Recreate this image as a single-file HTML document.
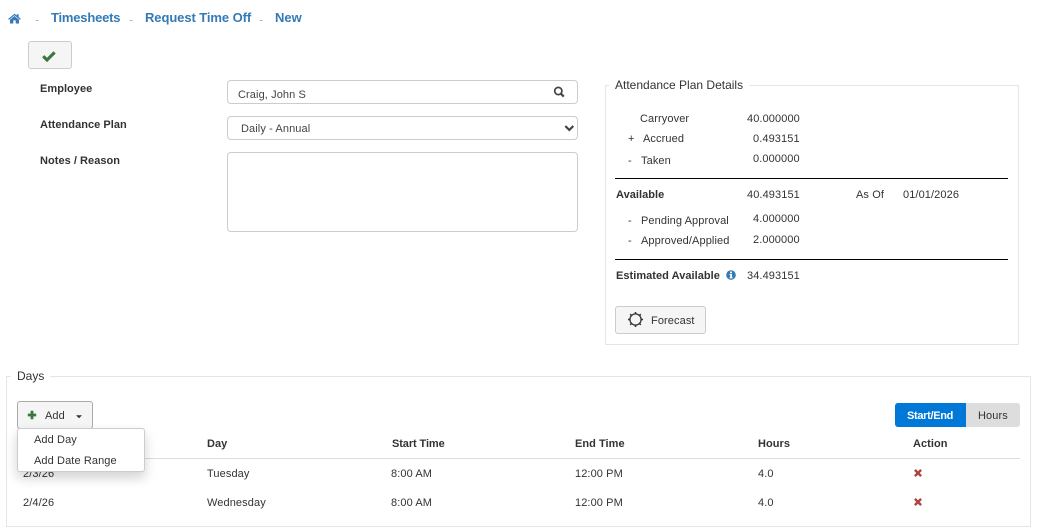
<!DOCTYPE html>
<html><head><meta charset="utf-8">
<style>
html,body{margin:0;padding:0;background:#fff}
body{width:1037px;height:532px;position:relative;overflow:hidden;font-family:"Liberation Sans",Arial,sans-serif;font-size:11px;color:#333}
.t{position:absolute;white-space:nowrap;line-height:14px;letter-spacing:.1px;margin-top:1px}
.b{font-weight:bold;letter-spacing:.04px}
.bc{font-size:13px;font-weight:bold;color:#337ab7;line-height:16px;top:10px;margin-top:0;letter-spacing:0}
.sep{color:#bbb;font-weight:normal;top:12px}
.box{position:absolute;box-sizing:border-box;border:1px solid #ccc;border-radius:4px;background:#fff}
.btn{position:absolute;box-sizing:border-box;border:1px solid #ccc;border-radius:3px;background:#f5f5f5}
.fs{position:absolute;box-sizing:border-box;border:1px solid #e5e5e5}
.leg{position:absolute;background:#fff;padding:0 6px;font-size:12px;line-height:14px;white-space:nowrap;color:#333}
.hr{position:absolute;height:1px;background:#000}
svg{position:absolute;display:block}
</style></head><body>

<svg style="left:8px;top:13px" width="13" height="11" viewBox="0 0 13 11"><path d="M6.5 0.7L0.2 5.9 1 6.9 6.5 2.3 12 6.9 12.8 5.9 10.6 4V1.2H8.8V2.5Z" fill="#337ab7"/><path d="M2 6.7L6.5 3 11 6.7V10.5H7.7V7.4H5.3V10.5H2Z" fill="#337ab7"/></svg>
<span class="t bc sep" style="left:35px">-</span>
<span class="t bc" style="left:51px;letter-spacing:-.2px">Timesheets</span>
<span class="t bc sep" style="left:129px">-</span>
<span class="t bc" style="left:145px;letter-spacing:-.08px">Request Time Off</span>
<span class="t bc sep" style="left:259px">-</span>
<span class="t bc" style="left:275px">New</span>

<div class="btn" style="left:28px;top:41px;width:44px;height:28px"></div>
<svg style="left:42px;top:50px" width="14" height="12" viewBox="0 0 14 12"><path d="M1.2 6.2L5 10 12.6 2.4" fill="none" stroke="#3c763d" stroke-width="3.1"/></svg>

<span class="t b" style="left:40px;top:81px">Employee</span>
<span class="t b" style="left:40px;top:117px">Attendance Plan</span>
<span class="t b" style="left:40px;top:153px">Notes / Reason</span>

<div class="box" style="left:227px;top:80px;width:351px;height:24px"></div>
<span class="t" style="left:238px;top:87px;color:#444">Craig, John S</span>
<svg style="left:553px;top:86px" width="13" height="13" viewBox="0 0 13 13"><circle cx="5.3" cy="5" r="3.6" fill="none" stroke="#444" stroke-width="1.7"/><path d="M8 7.8L10.8 10.6" stroke="#444" stroke-width="2.2"/></svg>

<div class="box" style="left:227px;top:116px;width:351px;height:24px"></div>
<span class="t" style="left:241px;top:121px;color:#444">Daily - Annual</span>
<svg style="left:564px;top:124px" width="12" height="9" viewBox="0 0 12 9"><path d="M1.3 2L5.3 6 9.3 2" fill="none" stroke="#444" stroke-width="2.2"/></svg>

<div class="box" style="left:227px;top:152px;width:351px;height:80px"></div>

<div class="fs" style="left:605px;top:85px;width:414px;height:260px"></div>
<div class="leg" style="left:609px;top:78px">Attendance Plan Details</div>

<span class="t" style="left:640px;top:111px">Carryover</span>
<span class="t" style="left:747px;top:111px">40.000000</span>
<span class="t" style="left:628px;top:131px">+</span>
<span class="t" style="left:643px;top:131px">Accrued</span>
<span class="t" style="left:753px;top:131px">0.493151</span>
<span class="t" style="left:628px;top:153px">-</span>
<span class="t" style="left:641px;top:153px">Taken</span>
<span class="t" style="left:753px;top:151px">0.000000</span>
<div class="hr" style="left:615px;top:178px;width:393px"></div>
<span class="t b" style="left:616px;top:187px">Available</span>
<span class="t" style="left:747px;top:187px">40.493151</span>
<span class="t" style="left:856px;top:187px">As Of</span>
<span class="t" style="left:903px;top:187px">01/01/2026</span>
<span class="t" style="left:628px;top:213px">-</span>
<span class="t" style="left:641px;top:213px">Pending Approval</span>
<span class="t" style="left:753px;top:211px">4.000000</span>
<span class="t" style="left:628px;top:233px">-</span>
<span class="t" style="left:641px;top:233px">Approved/Applied</span>
<span class="t" style="left:753px;top:232px">2.000000</span>
<div class="hr" style="left:615px;top:259px;width:393px"></div>
<span class="t b" style="left:616px;top:268px">Estimated Available</span>
<svg style="left:726px;top:270px" width="10" height="10" viewBox="0 0 10 10"><circle cx="5" cy="5" r="4.8" fill="#337ab7"/><rect x="4" y="1.6" width="2" height="1.6" fill="#fff"/><path d="M3.5 4H6V7.4H6.7V8.4H3.5V7.4H4.2V5H3.5Z" fill="#fff"/></svg>
<span class="t" style="left:747px;top:268px">34.493151</span>
<div class="btn" style="left:615px;top:306px;width:91px;height:28px"></div>
<svg style="left:627px;top:311px" width="17" height="17" viewBox="0 0 17 17"><circle cx="8.5" cy="8.5" r="5.6" fill="none" stroke="#333" stroke-width="1.3"/><g stroke="#333" stroke-width="1.5"><path d="M8.5 1V3M8.5 14V16M1 8.5H3M14 8.5H16M3.2 3.2L4.6 4.6M12.4 12.4L13.8 13.8M3.2 13.8L4.6 12.4M12.4 4.6L13.8 3.2"/></g></svg>
<span class="t" style="left:651px;top:313px">Forecast</span>

<div class="fs" style="left:6px;top:376px;width:1025px;height:151px"></div>
<div class="leg" style="left:11px;top:369px">Days</div>

<div class="btn" style="left:17px;top:401px;width:76px;height:28px;border-color:#aaa"></div>
<svg style="left:27px;top:410px" width="10" height="10" viewBox="0 0 10 10"><path d="M5 .8V9.2M.8 5H9.2" stroke="#3c763d" stroke-width="2.8"/></svg>
<span class="t" style="left:45px;top:408px">Add</span>
<svg style="left:76px;top:415px" width="6" height="4" viewBox="0 0 6 4"><path d="M0 0.3H6L3 3.3Z" fill="#333"/></svg>

<div class="btn" style="left:895px;top:403px;width:125px;height:24px;background:#ddd;border:0"></div>
<div class="btn" style="left:895px;top:403px;width:71px;height:24px;background:#0078d7;border:0;border-radius:3px 0 0 3px"></div>
<span class="t b" style="left:907px;top:408px;color:#fff;letter-spacing:-.32px">Start/End</span>
<span class="t" style="left:978px;top:408px;color:#333">Hours</span>

<span class="t b" style="left:207px;top:436px">Day</span>
<span class="t b" style="left:392px;top:436px;letter-spacing:-.1px">Start Time</span>
<span class="t b" style="left:575px;top:436px">End Time</span>
<span class="t b" style="left:758px;top:436px">Hours</span>
<span class="t b" style="left:913px;top:436px">Action</span>
<div class="hr" style="left:17px;top:458px;width:1003px;background:#ddd"></div>

<span class="t" style="left:23px;top:466px">2/3/26</span>
<span class="t" style="left:207px;top:466px">Tuesday</span>
<span class="t" style="left:391px;top:466px">8:00 AM</span>
<span class="t" style="left:575px;top:466px">12:00 PM</span>
<span class="t" style="left:758px;top:466px">4.0</span>
<svg style="left:914px;top:469px" width="8" height="8" viewBox="0 0 8 8"><path d="M.9 .9L7.1 7.1M7.1 .9L.9 7.1" stroke="#a94442" stroke-width="2.4"/></svg>

<span class="t" style="left:23px;top:495px">2/4/26</span>
<span class="t" style="left:207px;top:495px">Wednesday</span>
<span class="t" style="left:391px;top:495px">8:00 AM</span>
<span class="t" style="left:575px;top:495px">12:00 PM</span>
<span class="t" style="left:758px;top:495px">4.0</span>
<svg style="left:914px;top:498px" width="8" height="8" viewBox="0 0 8 8"><path d="M.9 .9L7.1 7.1M7.1 .9L.9 7.1" stroke="#a94442" stroke-width="2.4"/></svg>

<div style="position:absolute;box-sizing:border-box;left:17px;top:428px;width:128px;height:44px;background:#fff;border:1px solid #ccc;border-radius:3px;box-shadow:0 6px 12px rgba(0,0,0,.18)"></div>
<span class="t" style="left:34px;top:432px">Add Day</span>
<span class="t" style="left:34px;top:453px">Add Date Range</span>

</body></html>
